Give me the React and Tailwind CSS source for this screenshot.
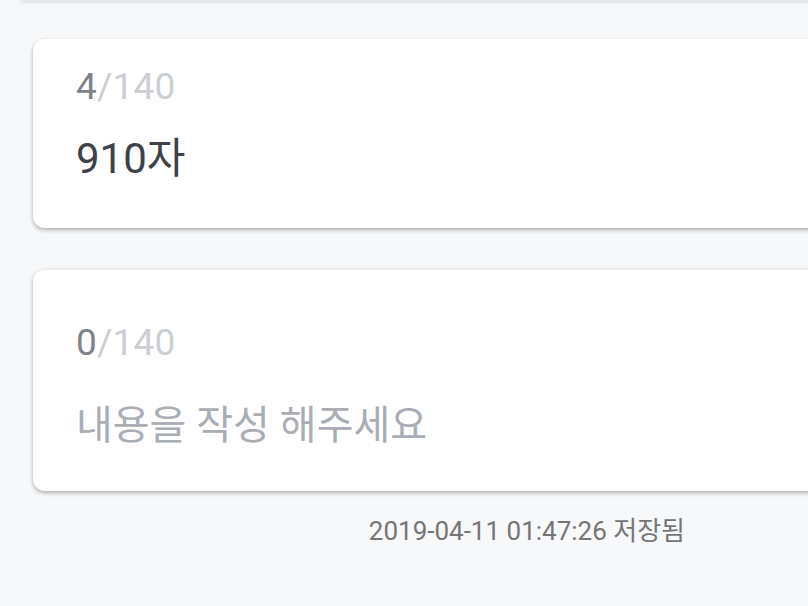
export default function App() {
  const font = { fontFamily: 'Roboto, "Noto Sans CJK KR", sans-serif' };

  return (
    <div
      className="w-[808px] h-[606px] overflow-hidden bg-[#f7f8fa] flex flex-col"
      style={font}
    >
      {/* bottom edge of the card above */}
      <div className="h-[1px] mt-[-1px] ml-[20px] w-[820px] bg-white rounded-b-xl shadow-[0_2px_3px_rgba(0,0,0,0.25)] shrink-0" />

      <div className="mt-[39px] ml-[33px] w-[800px] h-[189px] shrink-0 bg-white rounded-xl shadow-[0_2px_4px_rgba(0,0,0,0.3)] pl-[43px] pt-[22px]">
        <div className="text-[37px] leading-[52px] tracking-[0.2px]">
          <span className="text-[#7e838a]">4</span>
          <span className="text-[#cbcfd3]">/140</span>
        </div>
        <div className="mt-[20px] text-[42px] leading-[52px] text-[#3d4148]">910자</div>
      </div>

      <div className="mt-[41px] ml-[33px] w-[800px] h-[222px] shrink-0 bg-white rounded-xl border-t border-[#e9eaec] shadow-[0_2px_4px_rgba(0,0,0,0.3)] pl-[43px] pt-[47px]">
        <div className="text-[37px] leading-[52px] tracking-[0.2px]">
          <span className="text-[#7e838a]">0</span>
          <span className="text-[#cbcfd3]">/140</span>
        </div>
        <div className="mt-[31px] text-[40px] leading-[52px] text-[#a9aeb5]">내용을 작성 해주세요</div>
      </div>

      <div className="mt-[22px] flex justify-end pr-[123px]">
        <span className="text-[26px] leading-[36px] text-[#757575]">2019-04-11 01:47:26 저장됨</span>
      </div>
    </div>
  );
}
